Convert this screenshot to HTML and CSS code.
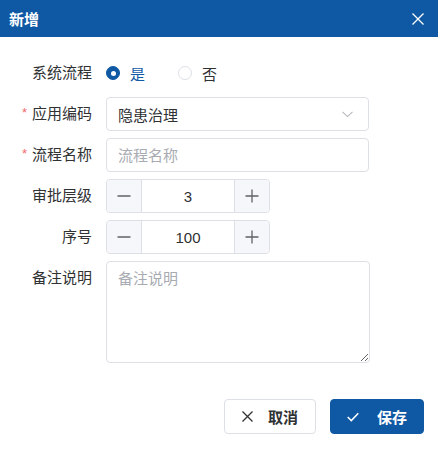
FILE: index.html
```html
<!DOCTYPE html>
<html lang="zh-CN">
<head>
<meta charset="utf-8">
<title>新增</title>
<link rel="stylesheet" href="styles.css">
</head>
<body>
<div class="dialog">
  <header class="dlg-header">
    <span class="dlg-title">新增</span>
    <button class="dlg-close" type="button" aria-label="关闭">
      <svg width="12" height="12" viewBox="0 0 12 12"><path d="M0.5 0.5 L11.5 11.5 M11.5 0.5 L0.5 11.5" stroke="#fff" stroke-width="1.3" fill="none"/></svg>
    </button>
  </header>
  <form class="dlg-body">
    <div class="row">
      <label class="lbl">系统流程</label>
      <div class="radios">
        <span class="radio checked"><span class="dot"></span><span class="rtext">是</span></span>
        <span class="radio"><span class="dot"></span><span class="rtext">否</span></span>
      </div>
    </div>
    <div class="row">
      <label class="lbl"><span class="req">*</span>应用编码</label>
      <div class="select">
        <span class="sel-text">隐患治理</span>
        <svg class="chev" width="11" height="7" viewBox="0 0 11 7"><polyline points="0.5,0.8 5.5,5.6 10.5,0.8" stroke="#b4b7bd" stroke-width="1.1" fill="none"/></svg>
      </div>
    </div>
    <div class="row">
      <label class="lbl"><span class="req">*</span>流程名称</label>
      <input class="input" type="text" placeholder="流程名称">
    </div>
    <div class="row">
      <label class="lbl">审批层级</label>
      <div class="num">
        <span class="num-btn minus"><svg width="14" height="14" viewBox="0 0 14 14"><path d="M0.5 7 H13.5" stroke="#606266" stroke-width="1.3"/></svg></span>
        <span class="num-val">3</span>
        <span class="num-btn plus"><svg width="14" height="14" viewBox="0 0 14 14"><path d="M0.5 7 H13.5 M7 0.5 V13.5" stroke="#606266" stroke-width="1.3"/></svg></span>
      </div>
    </div>
    <div class="row">
      <label class="lbl">序号</label>
      <div class="num">
        <span class="num-btn minus"><svg width="14" height="14" viewBox="0 0 14 14"><path d="M0.5 7 H13.5" stroke="#606266" stroke-width="1.3"/></svg></span>
        <span class="num-val">100</span>
        <span class="num-btn plus"><svg width="14" height="14" viewBox="0 0 14 14"><path d="M0.5 7 H13.5 M7 0.5 V13.5" stroke="#606266" stroke-width="1.3"/></svg></span>
      </div>
    </div>
    <div class="row">
      <label class="lbl">备注说明</label>
      <textarea class="textarea" placeholder="备注说明"></textarea>
    </div>
  </form>
  <footer class="dlg-footer">
    <button class="btn btn-cancel" type="button">
      <svg width="11" height="11" viewBox="0 0 11 11"><path d="M0.5 0.5 L10.5 10.5 M10.5 0.5 L0.5 10.5" stroke="#303133" stroke-width="1.3" fill="none"/></svg>
      <span>取消</span>
    </button>
    <button class="btn btn-save" type="button">
      <svg width="12" height="10" viewBox="0 0 12 10"><polyline points="0.7,5 4.3,8.6 11.3,1.2" stroke="#fff" stroke-width="1.5" fill="none"/></svg>
      <span>保存</span>
    </button>
  </footer>
</div>
</body>
</html>
```

FILE: styles.css
```css
* { box-sizing: border-box; }
html, body { margin: 0; padding: 0; background: #fff; }
body {
  font-family: "Liberation Sans", "Noto Sans CJK SC", sans-serif;
  font-size: 15px;
  color: #303133;
}
.dialog {
  width: 438px;
  height: 450px;
  display: flex;
  flex-direction: column;
  background: #fff;
}
.dlg-header {
  height: 37px;
  background: #0f59a4;
  display: flex;
  align-items: center;
  justify-content: space-between;
  padding: 0 14px 0 9px;
}
.dlg-title {
  color: #fff;
  font-size: 15px;
  font-weight: bold;
}
.dlg-close {
  background: none;
  border: none;
  padding: 0;
  width: 12px;
  height: 12px;
  display: flex;
  cursor: pointer;
}
.dlg-body {
  display: flex;
  flex-direction: column;
  gap: 7px;
  padding-top: 19px;
  margin: 0;
}
.row {
  display: flex;
  align-items: flex-start;
}
.lbl {
  width: 106px;
  padding-right: 14px;
  text-align: right;
  line-height: 34px;
  height: 34px;
  color: #303133;
  white-space: nowrap;
}
.req {
  color: #f56c6c;
  font-size: 13px;
  margin-right: 5px;
  vertical-align: top;
  position: relative;
  top: -1px;
}
.radios {
  height: 34px;
  display: flex;
  align-items: center;
  gap: 33px;
}
.radio {
  display: flex;
  align-items: center;
  gap: 10px;
}
.dot {
  width: 14px;
  height: 14px;
  border-radius: 50%;
  border: 1px solid #dcdfe6;
  background: #fff;
  position: relative;
}
.radio.checked .dot {
  border-color: #0f59a4;
  background: #0f59a4;
}
.radio.checked .dot::after {
  content: "";
  position: absolute;
  left: 50%;
  top: 50%;
  width: 5px;
  height: 5px;
  margin: -2.5px 0 0 -2.5px;
  border-radius: 50%;
  background: #fff;
}
.radio.checked .rtext { color: #0f59a4; }
.select, .input {
  width: 263px;
  height: 34px;
  border: 1px solid #dcdfe6;
  border-radius: 4px;
  padding: 0 11px;
  display: flex;
  align-items: center;
  justify-content: space-between;
  font-family: inherit;
  font-size: 15px;
  color: #303133;
  background: #fff;
  outline: none;
}
.chev { margin-right: 4px; }
.input::placeholder, .textarea::placeholder { color: #a8abb2; }
.num {
  width: 164px;
  height: 34px;
  border: 1px solid #dcdfe6;
  border-radius: 4px;
  display: flex;
  overflow: hidden;
}
.num-btn {
  width: 35px;
  background: #f5f7fa;
  display: flex;
  align-items: center;
  justify-content: center;
}
.num-btn.minus { border-right: 1px solid #dcdfe6; }
.num-btn.plus { border-left: 1px solid #dcdfe6; }
.num-val {
  flex: 1;
  display: flex;
  align-items: center;
  justify-content: center;
  color: #303133;
  font-size: 15px;
}
.textarea {
  width: 264px;
  height: 102px;
  border: 1px solid #dcdfe6;
  border-radius: 4px;
  padding: 5px 11px;
  font-family: inherit;
  font-size: 15px;
  line-height: 24px;
  color: #303133;
  outline: none;
  resize: vertical;
  margin: 0;
}
.dlg-footer {
  display: flex;
  justify-content: flex-end;
  gap: 14px;
  padding: 36px 14px 0 0;
}
.btn {
  height: 35px;
  border-radius: 4px;
  display: flex;
  align-items: center;
  justify-content: center;
  gap: 15px;
  font-family: inherit;
  font-size: 15px;
  font-weight: bold;
  cursor: pointer;
  padding: 0;
}
.btn-cancel {
  width: 92px;
  background: #fff;
  border: 1px solid #dcdfe6;
  color: #303133;
}
.btn-save {
  width: 94px;
  background: #0f59a4;
  border: 1px solid #0f59a4;
  color: #fff;
  gap: 18px;
}
```
